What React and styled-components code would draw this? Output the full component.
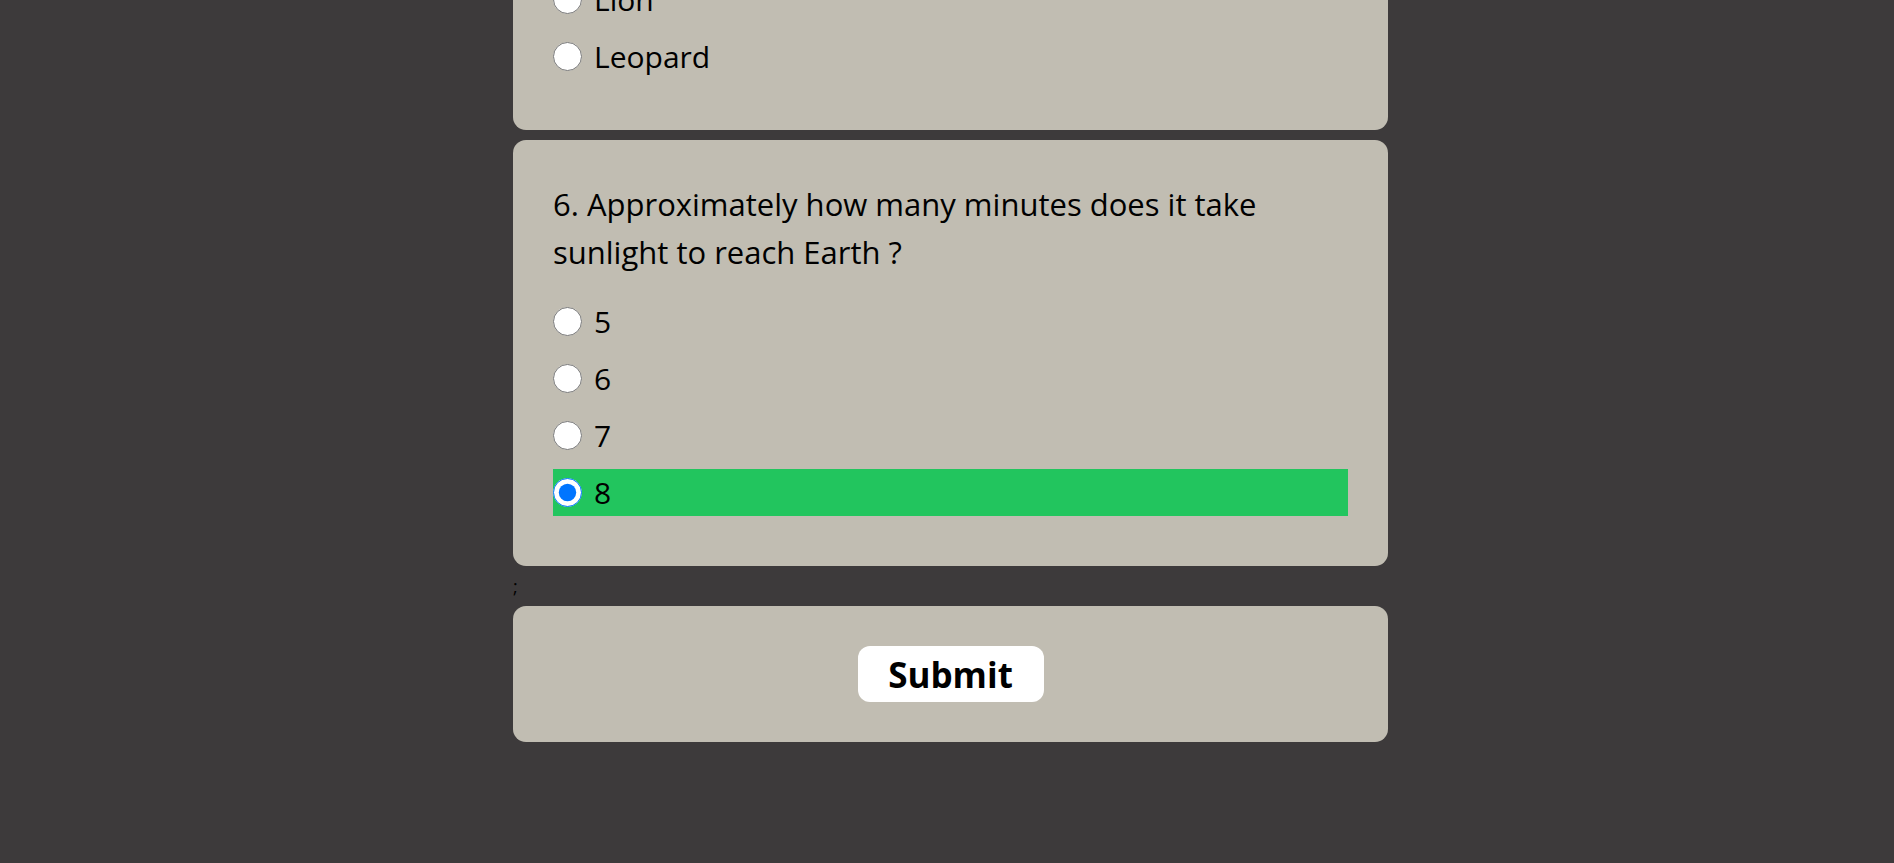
import React from "react";
import styled, { createGlobalStyle } from "styled-components";

const GlobalStyle = createGlobalStyle`
    html, body {
        margin: 0;
        padding: 0;
        background: #3d3a3b;
    }
    body {
        font-family: "Open Sans", "Noto Sans", sans-serif;
    }
`

const Page = styled.div`
    min-height: 100vh;
    padding-left: 7px;
    background: #3d3a3b;
    overflow: hidden;
`

const Quiz = styled.form`
    width: 875px;
    margin: -248px auto 0;
    display: flex;
    flex-direction: column;
`

const Card = styled.div`
    background: #c1bdb2;
    border-radius: 13px;
    padding: 40px;
    margin-bottom: ${props => props.mb || '10px'};
    text-align: ${props => props.align || 'left'};
`

const Question = styled.p`
    margin: 0 0 22px;
    font-size: 31px;
    line-height: 48px;
    color: #000;
`

const Option = styled.label`
    display: flex;
    align-items: center;
    gap: 12px;
    height: 47px;
    margin-bottom: 10px;
    font-size: 30px;
    color: #000;
    background: ${props => props.correct ? '#22c55e' : 'transparent'};
    cursor: pointer;
`

const Radio = styled.input`
    width: 29px;
    height: 29px;
    margin: 0;
    flex-shrink: 0;
`

const Separator = styled.div`
    font-size: 18px;
    line-height: 20px;
    color: #000;
    margin-bottom: 10px;
`

const SubmitButton = styled.button`
    width: 186px;
    height: 56px;
    border: none;
    border-radius: 12px;
    background: #fff;
    color: #000;
    font-family: "Open Sans", sans-serif;
    font-weight: 700;
    font-size: 35px;
    cursor: pointer;
`

const questions = [
    {
        text: "5. Which animal is known as the king of the jungle ?",
        options: ["Tiger", "Elephant", "Lion", "Leopard"],
        selected: null,
    },
    {
        text: "6. Approximately how many minutes does it take sunlight to reach Earth ?",
        options: ["5", "6", "7", "8"],
        selected: "8",
        answer: "8",
    },
]

const QuestionCard = ({ q, index, mb }) => (
    <Card mb={mb}>
        <Question>{q.text}</Question>
        {q.options.map(opt => (
            <Option key={opt} correct={q.selected === opt && q.answer === opt}>
                <Radio
                    type="radio"
                    name={`q${index}`}
                    value={opt}
                    defaultChecked={q.selected === opt}
                />
                {opt}
            </Option>
        ))}
    </Card>
)

export default function App() {
    return (
        <Page>
            <GlobalStyle />
            <Quiz onSubmit={e => e.preventDefault()}>
                <QuestionCard q={questions[0]} index={5} />
                <QuestionCard q={questions[1]} index={6} mb="10px" />
                <Separator>;</Separator>
                <Card align="center">
                    <SubmitButton type="submit">Submit</SubmitButton>
                </Card>
            </Quiz>
        </Page>
    )
}
